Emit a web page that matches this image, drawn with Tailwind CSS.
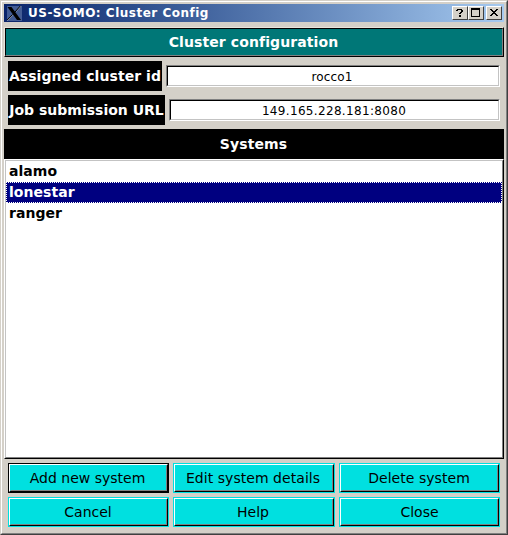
<!DOCTYPE html>
<html lang="en">
<head>
<meta charset="utf-8">
<title>US-SOMO: Cluster Config</title>
<script src="https://cdn.jsdelivr.net/npm/@tailwindcss/browser@4"></script>
</head>
<body class="font-['DejaVu_Sans',sans-serif] text-[14px] leading-[18px] text-black overflow-hidden">
<div class="w-[508px] h-[535px] bg-[#d4d0c8] border border-l-[#d4d0c8] border-t-[#d4d0c8] border-r-[#404040] border-b-[#404040]">
<div class="h-full border border-l-white border-t-white border-r-[#808080] border-b-[#808080] px-[2px] pt-[2px] flex flex-col">
  <header class="h-[18px] shrink-0 flex items-center bg-linear-to-r from-[#0a246a] to-[#a6caf0] pl-[3px] pr-[2px]">
    <svg class="w-[15px] h-[15px] bg-[#435c94] mt-px" viewBox="0 0 15 15">
      <path d="M14 0L8.5 6M5.5 9L.5 14.5" stroke="#a9adb0" stroke-width="1"/>
      <path d="M13.3 0L8 6M5.5 8.5L.2 14" stroke="#000" stroke-width="1"/>
      <path d="M.5 1h4l9.5 13h-4z" fill="#000"/>
    </svg>
    <h1 class="ml-[6px] flex-1 text-[12px] tracking-[0.5px] font-bold text-white whitespace-nowrap">US-SOMO: Cluster Config</h1>
    <div class="flex">
      <button class="w-4 h-[14px] bg-[#d4d0c8] border border-l-white border-t-white border-r-[#404040] border-b-[#404040] flex items-center justify-center"><svg class="w-[14px] h-3" viewBox="0 0 14 12" shape-rendering="crispEdges"><path d="M4 2h5v1H4zM3 3h2v1H3zM8 3h2v2H8zM7 5h2v1H7zM6 6h2v1H6zM6 8h2v2H6z"/></svg></button>
      <button class="w-4 h-[14px] bg-[#d4d0c8] border border-l-white border-t-white border-r-[#404040] border-b-[#404040] flex items-center justify-center"><svg class="w-[14px] h-3" viewBox="0 0 14 12" shape-rendering="crispEdges"><path fill-rule="evenodd" d="M2 1h9v9H2zM3 3v6h7V3z"/></svg></button>
      <button class="ml-[2px] w-4 h-[14px] bg-[#d4d0c8] border border-l-white border-t-white border-r-[#404040] border-b-[#404040] flex items-center justify-center"><svg class="w-[14px] h-3" viewBox="0 0 14 12" shape-rendering="crispEdges"><path d="M3 2h2v1H3zM9 2h2v1H9zM4 3h2v1H4zM8 3h2v1H8zM5 4h4v1H5zM6 5h2v1H6zM5 6h4v1H5zM4 7h2v1H4zM8 7h2v1H8zM3 8h2v1H3zM9 8h2v1H9z"/></svg></button>
    </div>
  </header>
  <div class="mt-[5px] h-[30px] shrink-0 border border-l-[#e8e4dc] border-t-[#e8e4dc] border-r-black border-b-black">
    <div class="h-full bg-[#007777] border border-l-black border-t-black border-r-[#808080] border-b-[#808080] text-white font-bold tracking-[0.1px] pr-px flex items-center justify-center">Cluster configuration</div>
  </div>
  <div class="mt-1 mx-1 h-[30px] shrink-0 flex items-center gap-1">
    <label class="w-[154px] h-[30px] bg-black text-white font-bold tracking-[0.07px] flex items-center justify-center whitespace-nowrap">Assigned cluster id</label>
    <div class="flex-1 h-[22px] border border-l-[#808080] border-t-[#808080] border-r-white border-b-white"><div class="h-full bg-white border border-l-black border-t-black border-r-[#c3c3c3] border-b-[#c3c3c3] text-[12px] tracking-[0.1px] flex items-center justify-center pt-px pr-[2px]">rocco1</div></div>
  </div>
  <div class="mt-1 mx-1 h-[30px] shrink-0 flex items-center gap-1">
    <label class="w-[157px] h-[30px] bg-black text-white font-bold flex items-center justify-center whitespace-nowrap">Job submission URL</label>
    <div class="flex-1 h-[22px] border border-l-[#808080] border-t-[#808080] border-r-white border-b-white"><div class="h-full bg-white border border-l-black border-t-black border-r-[#c3c3c3] border-b-[#c3c3c3] text-[12px] tracking-[0.33px] flex items-center justify-center pt-px pr-px">149.165.228.181:8080</div></div>
  </div>
  <h2 class="mt-1 h-[30px] shrink-0 bg-black text-white font-bold tracking-[0.1px] pr-px flex items-center justify-center">Systems</h2>
  <div class="h-[300px] shrink-0 border border-l-white border-t-white border-r-black border-b-black">
    <ul class="h-full bg-white border border-l-[#c3c3c3] border-t-[#c3c3c3] border-r-[#808080] border-b-[#808080] font-bold tracking-[0.05px]">
      <li class="h-[21px] px-[3px] pb-[2px] flex items-center">alamo</li>
      <li class="h-[21px] relative px-[3px] pb-[2px] flex items-center bg-[#000080] text-white">lonestar
        <svg class="absolute inset-0 w-[496px] h-[21px]" viewBox="0 0 496 21" shape-rendering="crispEdges" fill="none" stroke="#fff" stroke-dasharray="1 1"><path d="M0 .5H496M1 20.5H496M.5 0V21M495.5 1V21"/></svg></li>
      <li class="h-[21px] px-[3px] pb-[2px] flex items-center">ranger</li>
    </ul>
  </div>
  <div class="mt-1 mx-1 grid grid-cols-[161px_162px_161px] grid-rows-[30px_30px] gap-1">
    <button class="border border-black bg-black"><span class="block h-full border border-l-white border-t-white border-r-black border-b-black"><span class="h-full bg-[#00e0e0] border border-l-[#00e0e0] border-t-[#00e0e0] border-r-[#808080] border-b-[#808080] pr-[2px] flex items-center justify-center">Add new system</span></span></button>
    <button class="border border-[#00e0e0]"><span class="block h-full border border-l-white border-t-white border-r-black border-b-black"><span class="h-full bg-[#00e0e0] border border-l-[#00e0e0] border-t-[#00e0e0] border-r-[#808080] border-b-[#808080] tracking-[0.05px] pr-[2px] flex items-center justify-center">Edit system details</span></span></button>
    <button class="border border-[#00e0e0]"><span class="block h-full border border-l-white border-t-white border-r-black border-b-black"><span class="h-full bg-[#00e0e0] border border-l-[#00e0e0] border-t-[#00e0e0] border-r-[#808080] border-b-[#808080] tracking-[0.05px] pr-px flex items-center justify-center">Delete system</span></span></button>
    <button class="border border-[#00e0e0]"><span class="block h-full border border-l-white border-t-white border-r-black border-b-black"><span class="h-full bg-[#00e0e0] border border-l-[#00e0e0] border-t-[#00e0e0] border-r-[#808080] border-b-[#808080] pr-px flex items-center justify-center">Cancel</span></span></button>
    <button class="border border-[#00e0e0]"><span class="block h-full border border-l-white border-t-white border-r-black border-b-black"><span class="h-full bg-[#00e0e0] border border-l-[#00e0e0] border-t-[#00e0e0] border-r-[#808080] border-b-[#808080] pr-[2px] flex items-center justify-center">Help</span></span></button>
    <button class="border border-[#00e0e0]"><span class="block h-full border border-l-white border-t-white border-r-black border-b-black"><span class="h-full bg-[#00e0e0] border border-l-[#00e0e0] border-t-[#00e0e0] border-r-[#808080] border-b-[#808080] flex items-center justify-center">Close</span></span></button>
  </div>
</div>
</div>
</body>
</html>
